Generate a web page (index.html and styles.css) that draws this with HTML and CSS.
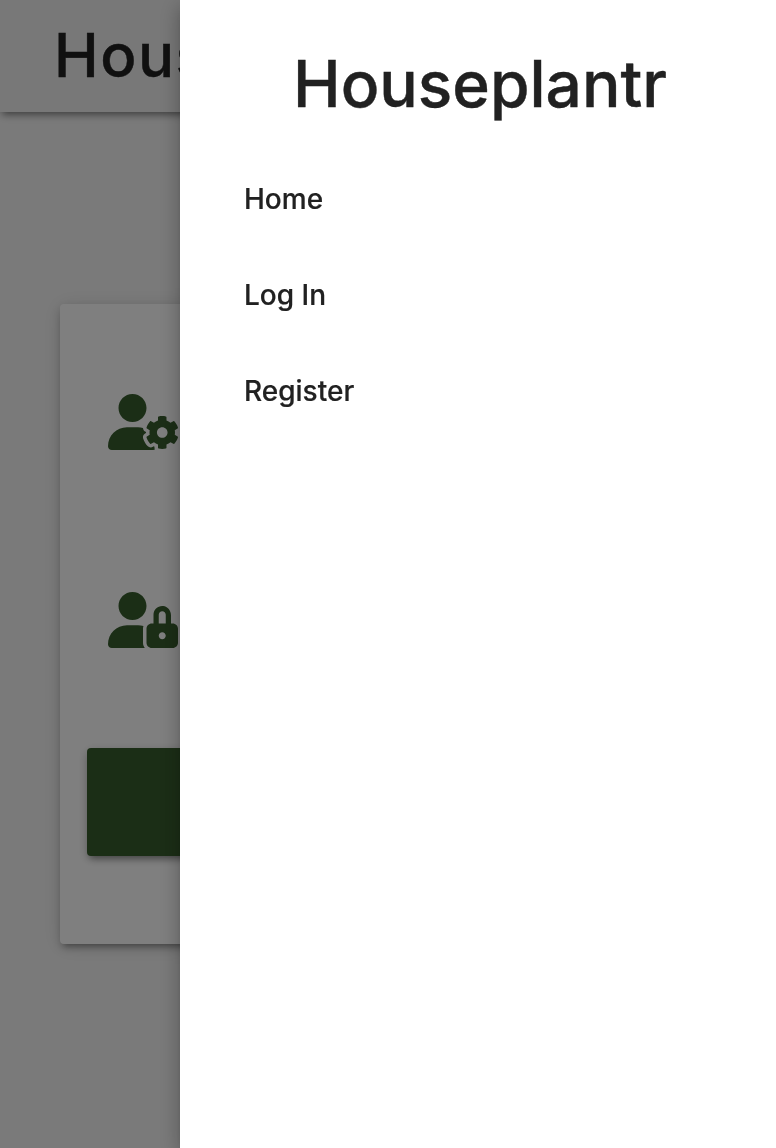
FILE: index.html
```html
<!DOCTYPE html>
<html lang="en">
<head>
<meta charset="utf-8">
<title>Houseplantr</title>
<link rel="stylesheet" href="styles.css">
</head>
<body>
<div class="app">
  <header class="toolbar"><span class="brand">Houseplantr</span></header>
  <main class="content">
    <section class="card">
      <div class="field">
        <svg class="icon" viewBox="0 0 640 512"><path d="M425.1 482.6c-2.303-1.25-4.572-2.559-6.809-3.93l-7.818 4.493c-6.002 3.504-12.83 5.352-19.75 5.352c-10.71 0-21.13-4.492-28.97-12.75c-18.41-20.09-32.29-44.15-40.22-69.9c-5.352-18.06 2.343-36.87 17.83-45.24l8.018-4.669c-.0664-2.621-.0664-5.242 0-7.859l-7.655-4.461c-12.3-6.953-19.4-19.66-19.64-33.38C305.6 306.3 290.4 304 274.7 304H173.3C77.61 304 0 381.7 0 477.4C0 496.5 15.52 512 34.66 512H413.3c5.727 0 10.9-1.727 15.66-4.188c-2.271-4.984-3.86-10.3-3.86-16.06V482.6zM224 256c70.7 0 128-57.31 128-128S294.7 0 224 0S96 57.31 96 128S153.3 256 224 256zM610.5 373.3c2.625-14 2.625-28.5 0-42.5l25.75-15c3-1.625 4.375-5.125 3.375-8.5c-6.75-21.5-18.25-41.13-33.25-57.38c-2.25-2.5-6-3.125-9-1.375l-25.75 14.88c-10.88-9.25-23.38-16.5-36.88-21.25V212.3c0-3.375-2.5-6.375-5.75-7c-22.25-5-45-4.875-66.25 0c-3.25 .625-5.625 3.625-5.625 7v29.88c-13.5 4.75-26 12-36.88 21.25L394.4 248.5c-2.875-1.75-6.625-1.125-9 1.375c-15 16.25-26.5 35.88-33.13 57.38c-1 3.375 .3751 6.875 3.25 8.5l25.75 15c-2.5 14-2.5 28.5 0 42.5l-25.75 15c-3 1.625-4.25 5.125-3.25 8.5c6.625 21.5 18.13 41 33.13 57.38c2.375 2.5 6 3.125 9 1.375l25.88-14.88c10.88 9.25 23.38 16.5 36.88 21.25v29.88c0 3.375 2.375 6.375 5.625 7c22.38 5 45 4.875 66.25 0c3.25-.625 5.75-3.625 5.75-7v-29.88c13.5-4.75 26-12 36.88-21.25l25.75 14.88c2.875 1.75 6.75 1.125 9-1.375c15-16.25 26.5-35.88 33.25-57.38c1-3.375-.3751-6.875-3.375-8.5L610.5 373.3zM496 400.5c-26.75 0-48.5-21.75-48.5-48.5s21.75-48.5 48.5-48.5c26.75 0 48.5 21.75 48.5 48.5S522.8 400.5 496 400.5z"/></svg>
      </div>
      <div class="field">
        <svg class="icon" viewBox="0 0 640 512"><path d="M592 288H576V212.7c0-41.84-30.03-80.04-71.66-84.27C456.5 123.6 416 161.1 416 208V288h-16C373.6 288 352 309.6 352 336v128c0 26.4 21.6 48 48 48h192c26.4 0 48-21.6 48-48v-128C640 309.6 618.4 288 592 288zM496 432c-17.62 0-32-14.38-32-32s14.38-32 32-32s32 14.38 32 32S513.6 432 496 432zM528 288h-64V208c0-17.62 14.38-32 32-32s32 14.38 32 32V288zM224 256c70.7 0 128-57.31 128-128S294.7 0 224 0S96 57.31 96 128S153.3 256 224 256zM320 336c0-8.672 1.738-16.87 4.303-24.7C308.6 306.6 291.9 304 274.7 304H173.3C77.61 304 0 381.7 0 477.4C0 496.5 15.52 512 34.66 512h301.7C326.3 498.6 320 482.1 320 464V336z"/></svg>
      </div>
      <button class="submit" type="button" aria-label="Submit"></button>
    </section>
  </main>
</div>
<div class="scrim"></div>
<aside class="drawer">
  <h1 class="drawer-title">Houseplantr</h1>
  <nav class="menu">
    <a class="menu-item">Home</a>
    <a class="menu-item">Log In</a>
    <a class="menu-item">Register</a>
  </nav>
</aside>
</body>
</html>
```

FILE: styles.css
```css
* { box-sizing: border-box; }
body {
  margin: 0;
  height: 1148px;
  overflow: hidden;
  font-family: Inter, "Liberation Sans", sans-serif;
  font-weight: 500;
  color: #212121;
}
.app { height: 1148px; background: #f5f5f5; }
.toolbar {
  height: 112px;
  padding-left: 54px;
  display: flex;
  align-items: center;
  background: #f0f0f0;
  box-shadow: 0 6px 6px -4px rgba(0,0,0,.3), 0 4px 8px rgba(0,0,0,.14), 0 2px 10px rgba(0,0,0,.12);
}
.brand {
  width: 126px;
  overflow: hidden;
  font-size: 60px;
  line-height: 64px;
  letter-spacing: 1.5px;
  margin-top: -3px;
  -webkit-text-stroke: .4px #212121;
}
.content { padding: 192px 60px 0; }
.card {
  height: 640px;
  padding: 90px 27px 0;
  border-radius: 4px;
  background: #fff;
  box-shadow: 0 6px 6px -4px rgba(0,0,0,.3), 0 4px 8px rgba(0,0,0,.14), 0 2px 20px rgba(0,0,0,.12);
}
.field { height: 198px; padding-left: 21px; }
.icon { display: block; width: 70px; height: 56px; fill: #375c2d; }
.submit {
  display: block;
  width: 100%;
  height: 108px;
  margin-top: -42px;
  border: 0;
  border-radius: 4px;
  background: #375c2d;
  box-shadow: 0 6px 6px -4px rgba(0,0,0,.3), 0 4px 8px rgba(0,0,0,.14), 0 2px 10px rgba(0,0,0,.12);
}
.scrim { position: fixed; inset: 0; background: rgba(0,0,0,.5); }
.drawer {
  position: fixed;
  inset: 0 0 0 180px;
  padding: 52px 0 0 4px;
  background: #fff;
  box-shadow: 0 8px 10px -5px rgba(0,0,0,.2), 0 6px 20px rgba(0,0,0,.3);
}
.drawer-title {
  margin: 0;
  font-size: 64px;
  line-height: 64px;
  font-weight: 500;
  text-align: center;
  -webkit-text-stroke: .4px #212121;
}
.menu { display: flex; flex-direction: column; padding: 35px 0 0 60px; }
.menu-item {
  height: 96px;
  line-height: 96px;
  font-size: 28px;
  -webkit-text-stroke: .2px #212121;
}
```
